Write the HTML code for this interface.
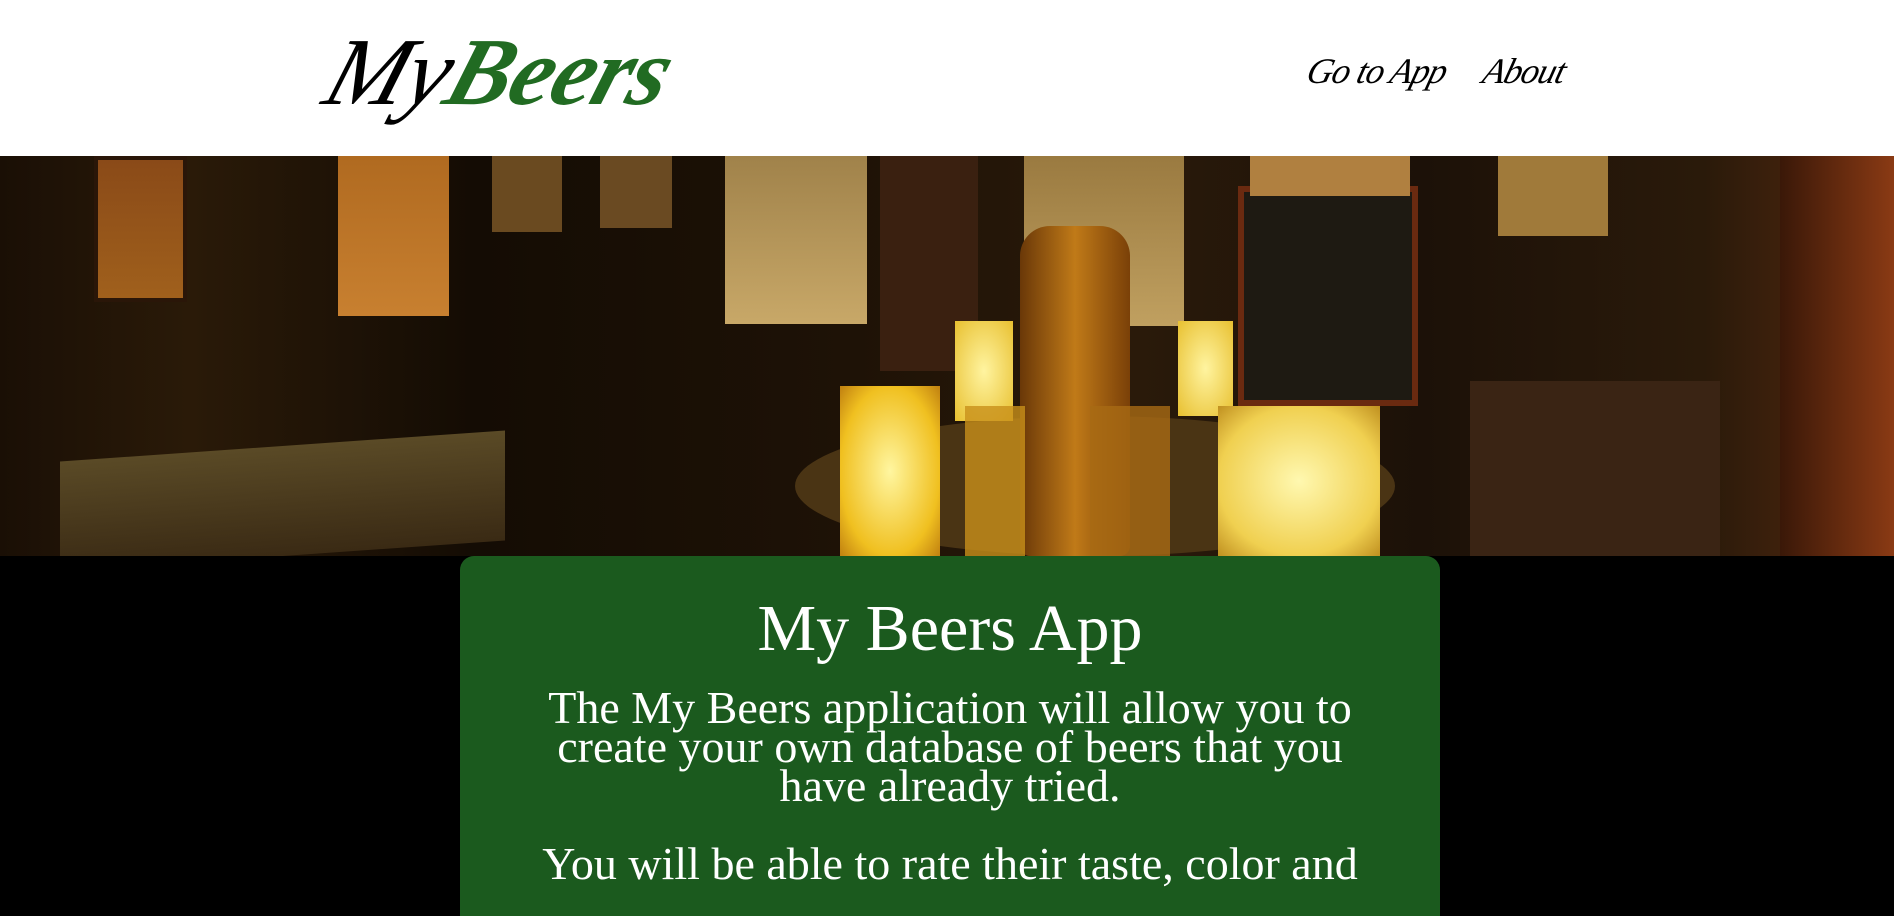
<!DOCTYPE html>
<html><head><meta charset="utf-8"><style>
*{margin:0;padding:0;box-sizing:border-box}
body{width:1894px;height:894px;overflow:hidden;background:#000;font-family:"Liberation Serif",serif;position:relative}
.hdr{position:absolute;left:0;top:0;width:1894px;height:156px;background:#fff}
.logo{position:absolute;left:330px;top:24px;font-family:"Liberation Serif",serif;font-style:italic;font-size:96px;letter-spacing:-1px;transform:skewX(-18deg);line-height:1}
.logo .m{color:#000}.logo .b{color:#216b22;font-weight:bold}
.nav{position:absolute;top:50px;font-style:italic;font-size:36px;color:#000;transform:skewX(-15deg);letter-spacing:-1px}
.hero{position:absolute;left:0;top:156px;width:1894px;height:400px;overflow:hidden;background:
linear-gradient(90deg,#1a0f05 0%,#2a1a08 10%,#140c04 25%,#1e1206 45%,#2a1a0a 60%,#1c1108 75%,#2a1a0a 90%,#5a2a10 100%)}
.r{position:absolute}
.box{position:absolute;left:460px;top:556px;width:980px;height:360px;background:#1b5a1e;border-radius:14px 14px 0 0;color:#fff;text-align:center}
.box h1{font-weight:normal;font-size:66px;margin-top:40px;line-height:1}
.box p{font-size:46px;line-height:39px;margin-top:26px;padding:0 78px}
</style></head><body>
<div class="hdr">
<div class="logo"><span class="m">My</span><span class="b">Beers</span></div>
<div class="nav" style="left:1308px">Go to App</div>
<div class="nav" style="left:1484px">About</div>
</div>
<div class="hero">
<div class="r" style="left:94px;top:0;width:93px;height:146px;background:linear-gradient(#8a4a18,#a0601c);border:4px solid #2a1608"></div>
<div class="r" style="left:338px;top:0;width:111px;height:160px;background:linear-gradient(#b06a20,#c88030)"></div>
<div class="r" style="left:492px;top:0;width:70px;height:76px;background:#6a4a20"></div>
<div class="r" style="left:600px;top:0;width:72px;height:72px;background:#6a4a22"></div>
<div class="r" style="left:725px;top:0;width:142px;height:168px;background:linear-gradient(#a0824a,#c8a868)"></div>
<div class="r" style="left:880px;top:0;width:98px;height:215px;background:#3a2010"></div>
<div class="r" style="left:1024px;top:0;width:160px;height:170px;background:linear-gradient(#9a7a40,#c0a060)"></div>
<div class="r" style="left:1238px;top:30px;width:180px;height:220px;background:#1e1a12;border:6px solid #6a2a10"></div>
<div class="r" style="left:1250px;top:0;width:160px;height:40px;background:#b08040"></div>
<div class="r" style="left:1498px;top:0;width:110px;height:80px;background:#a07a3a"></div>
<div class="r" style="left:1780px;top:0;width:114px;height:400px;background:linear-gradient(90deg,#3a1808,#8a3a14)"></div>
<div class="r" style="left:60px;top:290px;width:445px;height:110px;background:linear-gradient(#5a4a26,#3a2a14);transform:skewY(-4deg)"></div>
<div class="r" style="left:1470px;top:225px;width:250px;height:175px;background:#3a2414"></div>
<div class="r" style="left:795px;top:260px;width:600px;height:140px;border-radius:50%;background:#4a3414"></div>
<div class="r" style="left:840px;top:230px;width:100px;height:170px;background:radial-gradient(#fff6a0,#f0c020 70%,#c08010)"></div>
<div class="r" style="left:955px;top:165px;width:58px;height:100px;background:radial-gradient(#fff4a0,#e8c030)"></div>
<div class="r" style="left:1178px;top:165px;width:55px;height:95px;background:radial-gradient(#fff4a0,#e8c030)"></div>
<div class="r" style="left:1218px;top:250px;width:162px;height:150px;background:radial-gradient(#fff8b0,#f0d050 70%,#c09020)"></div>
<div class="r" style="left:1020px;top:70px;width:110px;height:330px;border-radius:30px 30px 10px 10px;background:linear-gradient(90deg,#6a3808,#c07a18,#7a4008)"></div>
<div class="r" style="left:965px;top:250px;width:60px;height:150px;background:#c8901a;opacity:.8"></div>
<div class="r" style="left:1090px;top:250px;width:80px;height:150px;background:#a86a14;opacity:.8"></div>
</div>
<div class="box">
<h1>My Beers App</h1>
<p>The My Beers application will allow you to create your own database of beers that you have already tried.<br><br>You will be able to rate their taste, color and</p>
</div>
</body></html>
